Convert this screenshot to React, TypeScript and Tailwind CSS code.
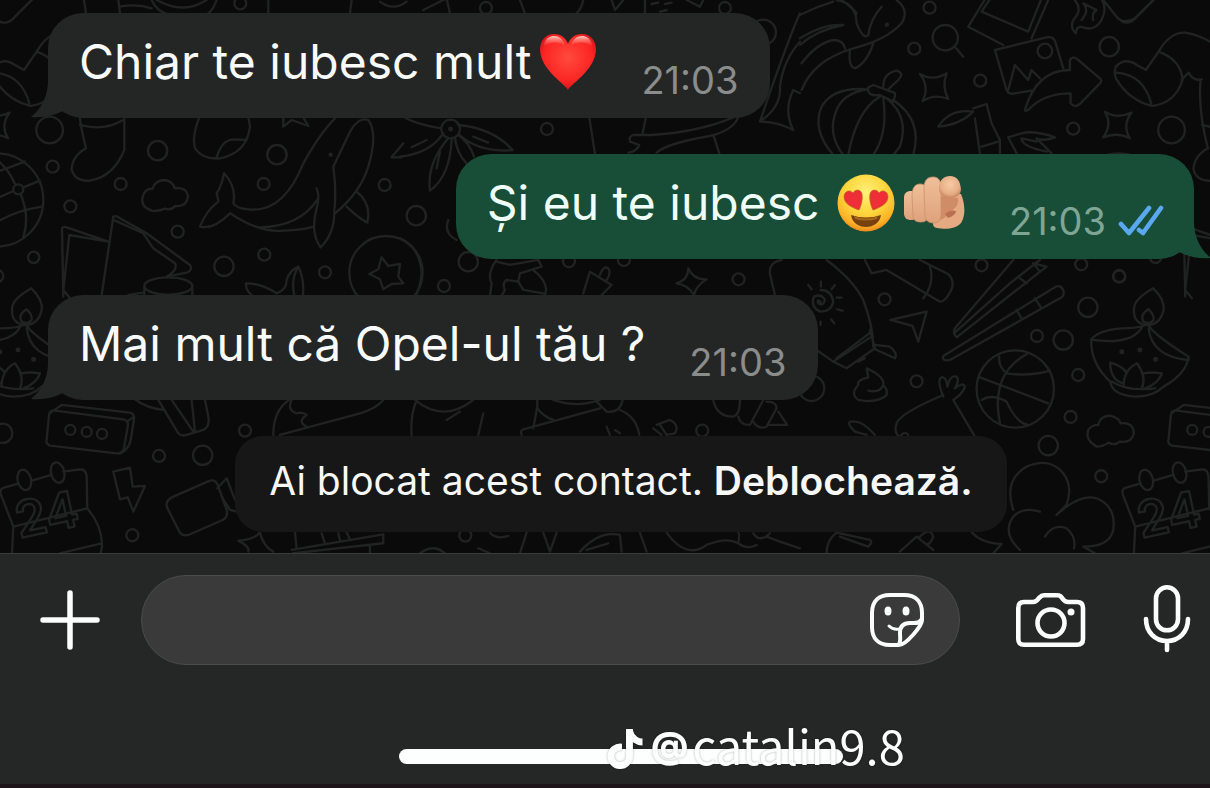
import type { ReactNode } from 'react';
import { FaTiktok } from 'react-icons/fa';

type MessageProps = {
  side: 'in' | 'out';
  time: string;
  read?: boolean;
  children: ReactNode;
};

function Heart() {
  return (
    <svg viewBox="0 0 58 58" className="w-[58px] h-[58px]" role="img" aria-label="red heart">
      <defs>
        <radialGradient id="heart-fill" cx="50%" cy="42%" r="62%">
          <stop offset="0" stopColor="#ff4a3c" />
          <stop offset="0.7" stopColor="#fb2524" />
          <stop offset="1" stopColor="#c40d18" />
        </radialGradient>
        <linearGradient id="heart-shine" x1="0" y1="0" x2="0" y2="1">
          <stop offset="0" stopColor="#ffd0c6" />
          <stop offset="1" stopColor="#ff5a4a" stopOpacity="0" />
        </linearGradient>
      </defs>
      <path d="M29 57C25 50 2 37 1 17C1 7 7 1 15 1C22 1 27 5 29 11C31 5 36 1 43 1C51 1 57 7 57 17C56 37 33 50 29 57Z" fill="url(#heart-fill)" />
      <path d="M5 11C7 5 11 3 15 3C20 3 24 6 26 12C20 9 11 8 5 14Z" fill="url(#heart-shine)" />
      <path d="M53 11C51 5 47 3 43 3C38 3 34 6 32 12C38 9 47 8 53 14Z" fill="url(#heart-shine)" />
    </svg>
  );
}

function HeartEyes() {
  return (
    <svg viewBox="0 0 58 58" className="w-[58px] h-[58px]" role="img" aria-label="smiling face with heart eyes">
      <defs>
        <radialGradient id="face-fill" cx="50%" cy="32%" r="68%">
          <stop offset="0" stopColor="#fff27a" />
          <stop offset="0.55" stopColor="#ffd43b" />
          <stop offset="0.85" stopColor="#fbb127" />
          <stop offset="1" stopColor="#ec8a1c" />
        </radialGradient>
      </defs>
      <circle cx="29" cy="29" r="28.5" fill="url(#face-fill)" />
      <path d="M22 36C16 34 7 30 7 23C7 17 13 15 16 19C18 15 24 15 25 20C26 26 24 32 22 36Z" fill="#ee2f37" stroke="#b9661c" strokeWidth="0.7" />
      <path d="M36 36C42 34 51 30 51 23C51 17 45 15 42 19C40 15 34 15 33 20C32 26 34 32 36 36Z" fill="#ee2f37" stroke="#b9661c" strokeWidth="0.7" />
      <path d="M14 41Q29 46 44 41C43 49 36 53 29 53C22 53 15 49 14 41Z" fill="#77410f" />
      <path d="M17 42Q29 47 41 42L40 45Q29 48 18 45Z" fill="#a5681b" />
    </svg>
  );
}

function PointingHand() {
  return (
    <svg viewBox="0 0 62 54" className="w-[62px] h-[54px]" role="img" aria-label="pointing at you">
      <defs>
        <linearGradient id="skin" x1="0" y1="0" x2="0" y2="1">
          <stop offset="0" stopColor="#efbf99" />
          <stop offset="1" stopColor="#dfa27b" />
        </linearGradient>
        <radialGradient id="fingertip" cx="50%" cy="38%" r="62%">
          <stop offset="0" stopColor="#f6cba7" />
          <stop offset="0.7" stopColor="#e8ae86" />
          <stop offset="1" stopColor="#c88762" />
        </radialGradient>
      </defs>
      <path d="M36 18L58 18C62 27 63 40 58 47C52 54 41 53 34 52C29 51 29 46 32 45Z" fill="#e6aa82" />
      <path d="M36 20L55 22C56 30 51 33 47 36C43 40 41 44 33 45Z" fill="#cf8c67" />
      <path d="M42 38Q47 33 53 35Q53 39 45 42Z" fill="#b87150" />
      <rect x="1" y="15" width="14" height="29" rx="6" fill="url(#skin)" />
      <path d="M9 20C9 12 12 8 17 8C22 8 25 11 25 17V40C25 44 22 46 18 46C13 46 10 44 10 40Z" fill="url(#skin)" stroke="#cc9069" strokeWidth="0.8" />
      <path d="M21 12C21 4 25 1 30 1C36 1 38 5 38 12V38C38 44 36 47 31 47C25 47 22 44 22 39Z" fill="url(#skin)" stroke="#cc9069" strokeWidth="0.8" />
      <path d="M36 12C36 4 41 0 47 0C54 0 57 5 58 13C58 19 53 22 47 22C41 22 36 19 36 12Z" fill="url(#fingertip)" />
    </svg>
  );
}

function DoubleCheck() {
  return (
    <svg viewBox="0 0 46 32" className="w-[46px] h-8" fill="none" stroke="#5aa9f0" strokeWidth="4.6" strokeLinecap="round" strokeLinejoin="round" role="img" aria-label="Citit">
      <path d="M3 19L11 28L31 3" />
      <path d="M21 25L25 28L43 3" />
    </svg>
  );
}

function Message({ side, time, read, children }: MessageProps) {
  const out = side === 'out';
  return (
    <div
      className={`relative flex w-fit items-end rounded-[35px] pt-[19px] pb-[18px] pl-[31px] ${
        out ? 'self-end bg-[#184d38] pr-[30px]' : 'self-start bg-[#242625] pr-8'
      }`}
    >
      {/* tail */}
      <svg
        viewBox="0 0 34 40"
        className={`absolute bottom-0 w-[34px] h-10 ${
          out ? '-right-[17px] -scale-x-100 fill-[#184d38]' : '-left-[17px] fill-[#242625]'
        }`}
        aria-hidden="true"
      >
        <path d="M17 0V5C16 20 10 31 0 39C12 40 22 38 32 33L34 0Z" />
      </svg>
      <p className={`flex items-center pb-2 text-5xl leading-[60px] whitespace-pre ${out ? 'text-[#effff7]' : 'text-[#f9fbfa]'}`}>
        {children}
      </p>
      <div className={`flex items-center gap-3 pl-11 text-[38px] leading-10 ${out ? 'text-[#7fa594]' : 'text-[#8b8c8c]'}`}>
        <time>{time}</time>
        {read && <DoubleCheck />}
      </div>
    </div>
  );
}

const bigDots = [
  [473, 452, 29], [831, 464, 29], [672, 799, 29], [608, 1366, 29], [1249, 647, 29], [1405, 785, 29],
  [3328, 140, 29], [3190, 1020, 29], [3264, 922, 29], [3145, 1337, 29], [2435, 1165, 38], [2290, 97, 38],
];

const smallDots = [
  [721, 10, 18], [362, 552, 18], [211, 619, 18], [533, 695, 18], [791, 552, 18], [793, 764, 18],
  [975, 817, 18], [1154, 555, 18], [735, 1292, 18], [477, 1368, 18], [397, 1606, 18], [1458, 24, 18],
  [2175, 24, 18], [1641, 387, 18], [1332, 858, 18], [2216, 838, 18], [2789, 23, 18], [2743, 146, 18],
  [2941, 242, 18], [3220, 386, 18], [2945, 796, 18], [3244, 793, 18], [3358, 830, 18], [2654, 898, 18],
  [3111, 1008, 18], [3235, 1125, 18], [2750, 1144, 18], [3212, 1251, 18], [3304, 1429, 18],
  [2107, 1292, 18], [1396, 1607, 18], [1707, 784, 18], [1872, 780, 18],
];

// Doodles on the seam: drawn at the left edge and again one tile to the right.
function SeamDoodles() {
  return (
    <g>
      <path d="M-18 200Q10 170 45 195L72 210L110 155Q145 95 190 98Q250 108 300 150M110 155Q178 180 182 240Q160 310 90 318Q20 300-18 235Q-25 215-18 200M-15 218Q65 225 88 310" />
      <path d="M179 240L200 218Q215 245 240 238M236 240Q228 330 258 445Q215 470 215 510Q225 545 270 542Q340 530 373 450V355M240 375Q310 395 370 360" />
      <path d="M-51 335Q-14 358 29 338Q0 375 24 415Q-14 395-56 412Q-28 375-51 335Z" />
      <path d="M0 65Q25 75 45 50L110-15" />
      <circle cx="149" cy="390" r="40" />
      <circle cx="158" cy="500" r="18" />
      <circle cx="101" cy="772" r="17" />
      <circle cx="-8" cy="828" r="18" />
      {/* globe */}
      <circle cx="-10" cy="600" r="140" />
      <circle cx="55" cy="568" r="15" />
      <path d="M-20 470Q25 505 45 552M-20 520L75 485M70 562L120 542M62 583Q90 650 70 712M-20 672Q50 630 126 620M-20 600L40 573" />
      {/* greeting cards */}
      <path d="M186 685L190 890M186 685Q190 678 200 682L325 725L208 705L190 870L210 895M340 650L305 885M340 650Q350 645 360 655L440 700L570 795Q580 810 560 818L500 830M345 662L430 700L460 745L525 790Q535 810 500 830" />
      <ellipse cx="505" cy="858" rx="72" ry="26" />
      <path d="M433 858V900M577 858V900M385 885L430 878" />
      {/* oil lamp */}
      <path d="M94 865Q130 900 125 930Q115 975 75 975Q30 970 37 920Q42 895 94 865ZM80 928Q98 945 95 960Q85 975 65 965Q52 945 80 928Z" />
      <path d="M-92 1018Q-70 990 0 985Q50 985 70 975L80 975Q90 1000 200 1070Q195 1120 125 1160Q95 1190 40 1190Q-30 1185-35 1145Q-95 1090-92 1018ZM-88 1020Q30 1035 60 982M80 985Q90 1070 200 1080M-30 1145Q20 1175 100 1165" />
      <path d="M5 1160Q5 1110 45 1090Q75 1130 60 1165M5 1150Q-35 1140-35 1088Q-5 1095 12 1115M65 1120Q90 1115 120 1120Q110 1150 70 1165" />
      <circle cx="0" cy="1055" r="4" />
      <circle cx="54" cy="1050" r="4" />
      <circle cx="101" cy="1078" r="4" />
      {/* cassette */}
      <path d="M165 1232L370 1258Q388 1262 383 1280L372 1345Q366 1362 350 1360L150 1337Q136 1332 140 1318L147 1245Q150 1230 165 1232ZM152 1238L185 1215L390 1238Q405 1242 402 1258L392 1320Q388 1345 362 1360M385 1262L402 1250" />
      <circle cx="211" cy="1290" r="15" />
      <circle cx="260" cy="1296" r="15" />
      <circle cx="306" cy="1302" r="15" />
      {/* calendar */}
      <path d="M52 1452L15 1462Q-3 1465 3 1485L40 1580L262 1525L260 1430Q258 1408 240 1408L190 1415M95 1442L155 1425M40 1580L36 1660M262 1525Q308 1580 306 1640L302 1660M180 1660L305 1630" />
      <ellipse cx="73" cy="1440" rx="20" ry="31" transform="rotate(-14 73 1440)" />
      <ellipse cx="173" cy="1418" rx="20" ry="31" transform="rotate(-14 173 1418)" />
      <text x="58" y="1615" transform="rotate(-12 58 1615)" className="font-['Inter',sans-serif] text-[150px] font-semibold">24</text>
    </g>
  );
}

function Wallpaper() {
  return (
    <svg className="absolute inset-0 h-full w-full" fill="none" stroke="#212222" strokeWidth="7" strokeLinecap="round" strokeLinejoin="round" aria-hidden="true">
      <g transform="scale(0.3333)">
        {[...bigDots, ...smallDots].map(([cx, cy, r]) => (
          <circle key={`${cx}-${cy}`} cx={cx} cy={cy} r={r} />
        ))}
        <circle cx="8" cy="1300" r="29" />
        <SeamDoodles />
        <g transform="translate(3366 0)">
          <SeamDoodles />
        </g>

        {/* top edge */}
        <path d="M252 0L258 40M355 0L360 40M455 0Q470 35 510 45M360 20Q410 10 455 25M470 0Q550 45 620 0M650 0Q640 30 620 45M805 0V40M1055 0L1050 40M1140 5Q1180 35 1220 5M1270 30L1340-5L1350 40M1560 0L1575 40M1835 0L1845 30L1870 0M1750 0Q1745 25 1730 40M1935 0V40M1955 12L1975 8M1995 12L2015 8M1980 35L2000 30M2060 0L2100 20L2110 0" />
        {/* cloud */}
        <path d="M455 632Q420 620 428 590Q435 565 458 566Q465 540 495 540Q520 545 524 565Q560 560 564 590Q560 622 525 618Q515 632 495 626Q475 635 455 632Z" />
        {/* candy */}
        <path d="M598 352Q575 410 585 445Q610 480 660 475Q740 460 750 380L745 352M650 472Q665 420 700 418L740 420M850 352V380L875 360L925 378L910 352" />
        {/* whale */}
        <path d="M1005 355Q960 400 910 490Q850 640 745 628Q710 625 700 610Q710 560 672 520Q665 560 650 580Q655 600 655 605Q620 630 600 680Q640 690 690 640Q780 700 850 692Q910 690 940 680M780 682Q900 680 955 595M950 565Q960 590 950 625Q930 700 962 742Q1005 700 1003 630Q1010 580 1000 500L1050 395Q1075 350 1105 360Q1135 400 1105 500Q1080 580 1005 640M1070 575Q1115 610 1102 668Q1070 650 1040 620" />
        <circle cx="992" cy="464" r="3" />
        {/* sprout */}
        <path d="M780 900Q735 880 738 850Q785 850 830 880Q860 870 860 840Q870 810 895 800Q915 840 908 895M895 800Q870 840 885 895" />
        {/* star badge */}
        <circle cx="1158" cy="818" r="110" />
        <path d="M1145 772L1165 798L1200 792L1195 830L1210 850L1175 852L1150 868L1140 838L1108 822L1135 808Z" />
        {/* flower */}
        <circle cx="1352" cy="387" r="28" />
        <circle cx="1352" cy="387" r="4" />
        <path d="M1324 385Q1250 375 1200 345M1330 400Q1290 460 1200 470M1375 375Q1480 385 1538 450Q1440 460 1378 405M1345 415Q1280 490 1290 572Q1350 530 1355 418M1365 412Q1370 460 1400 490M1375 405Q1410 430 1422 470M1235 442L1280 420M1420 410L1465 428M1320 455L1310 505M1175 472L1210 430M1175 472H1205" />
        {/* magician's hand */}
        <path d="M1768 352L1785 460M1938 352L1928 400M2200 352Q2100 395 1955 405H1900Q1885 410 1890 425L1918 435Q1910 455 1885 458M1970 458Q2000 430 2130 408Q2200 390 2215 352M2142 410L2158 460" />
        <path d="M1370 720Q1330 700 1345 660M1200 715Q1260 740 1265 820Q1260 870 1240 900" />
        {/* puzzle */}
        <path d="M1490 780Q1460 820 1475 850L1470 890M1490 785L1530 795L1615 780L1625 800L1560 820L1555 845L1520 840Q1505 850 1515 870L1500 895M1555 845L1570 870L1630 880M1600 810Q1650 850 1635 885M1750 880L1770 815L1835 855L1805 885M1800 825Q1810 795 1825 805Q1835 820 1820 840" />
        <path d="M2065 805Q2080 840 2120 838Q2090 855 2082 885Q2065 855 2030 850Q2065 840 2065 805ZM2345 780Q2300 790 2312 830L2325 885" />

        {/* comet and dolphin */}
        <path d="M2510 0Q2570 10 2570 70Q2590 120 2605 105Q2610 60 2645 20M2525 0Q2560 25 2570 40M2690 0Q2730 30 2705 70Q2660 120 2560 145Q2440 180 2405 270M2400 135Q2450 90 2530 75Q2470 70 2400 115M2405 190Q2450 130 2500 120Q2530 120 2535 145M2550 155Q2545 200 2565 205Q2600 190 2620 130" />
        <path d="M2400 45Q2450 20 2500 5M2400 125Q2350 180 2340 260Q2345 320 2280 365Q2330 365 2380 390Q2350 330 2380 270L2400 280M2400 40Q2360 130 2280 365" />
        <circle cx="2661" cy="74" r="3" />
        {/* magnifier */}
        <circle cx="2836" cy="113" r="38" />
        <path d="M2866 142L2890 170" />
        {/* photos */}
        <path d="M2960-10L2905 80L3010 135M3145 0L3095 115M2975-10L2945 35L3085 95L3125-5M2985 150L3140 112Q3160 108 3166 125L3190 205M2985 150L3020 270Q3025 285 3045 280L3095 272M3025 270L3045 195L3085 240L3095 210L3120 235" />
        <circle cx="3135" cy="153" r="22" />
        <path d="M3075 330Q3110 210 3210 210V180Q3220 165 3235 180L3300 235Q3308 242 3300 250L3240 312Q3225 325 3212 310V280Q3130 280 3085 330Q3075 335 3075 330Z" />
        {/* flame */}
        <path d="M3225 0Q3250 30 3220 60Q3210 85 3228 100Q3230 75 3250 82Q3285 95 3305 60Q3325 20 3300-10M3245 60Q3270 30 3250 10L3290 30Q3275 40 3280 60M3310 0L3350 50Q3370 75 3405 55L3460 0" />
        {/* pumpkin */}
        <path d="M2600 268Q2500 260 2465 320Q2435 390 2500 465M2600 268Q2530 280 2510 330Q2480 400 2530 465M2640 290Q2570 330 2545 465M2650 295Q2665 400 2620 465M2660 295Q2730 350 2700 440L2680 465M2680 300Q2770 360 2740 465M2605 262Q2600 290 2640 285L2680 305Q2690 280 2682 278L2620 255ZM2650 260Q2650 220 2690 212Q2715 220 2695 240L2665 268" />
        <path d="M2760 222Q2800 245 2840 220Q2825 260 2845 297Q2805 280 2768 303Q2790 260 2760 222Z" />
        {/* palm and leaves */}
        <path d="M2815 380Q2850 325 2920 335Q2880 375 2815 380ZM2920 325L2960 312L2975 370L3000 420V460M2925 355L2940 460M2945 440L2995 425M3025 412L3065 400Q3100 390 3165 412Q3130 425 3110 415L3155 460M3025 412L3050 460M3065 415Q3065 440 3140 455M3065 415L3110 425" />
        {/* rocket */}
        <path d="M2480 780Q2560 840 2590 900Q2620 980 2620 1040M2450 1050L2500 1085L2615 1010M2500 1085L2540 1105L2625 1045L2610 990M2510 1075L2615 995M2625 1035L2670 1040Q2695 1060 2685 1075L2625 1048M2575 1085L2595 1075M2595 780L2615 820L2660 810L2820 905Q2840 905 2858 860Q2860 830 2840 820L2760 780M2770 895Q2805 850 2790 800" />
        {/* sun swirl */}
        <path d="M2462 906Q2450 895 2455 910Q2470 920 2475 900Q2465 880 2442 890Q2430 920 2460 935Q2495 935 2500 905Q2495 870 2462 870M2463 845V860M2505 855L2495 868M2525 893H2510M2528 932L2512 928M2503 970L2493 958M2462 975V965M2425 855L2435 868" />
        <path d="M2672 960L2780 935L2755 1025L2738 978Z" />
        {/* chopsticks */}
        <path d="M3040 780L2865 985Q2858 1000 2870 1012L3050 870L3140 800L3100 790M2862 1000L3030 850L3120 780M2830 1068L3160 865Q3180 850 3190 870Q3195 890 3180 895L2850 1080Q2825 1085 2830 1068M3050 930L3065 955M3105 895L3125 925M3060 835L3080 850M3100 790L3120 815" />
        {/* ice cream swirl */}
        <path d="M2600 1105Q2655 1130 2650 1155Q2670 1175 2655 1190Q2620 1210 2575 1200Q2550 1180 2575 1155Q2570 1140 2605 1132ZM2650 1155Q2640 1180 2605 1172" />
        {/* hand */}
        <path d="M2830 1185Q2700 1240 2690 1270Q2680 1300 2700 1310M2700 1310Q2715 1290 2725 1305M2860 1200L2925 1310M2830 1190Q2810 1140 2825 1132Q2840 1130 2842 1160Q2850 1125 2870 1130Q2880 1140 2865 1165Q2890 1145 2895 1160Q2890 1180 2860 1200" />
        {/* basketball */}
        <circle cx="3046" cy="1167" r="116" />
        <path d="M2940 1132L3145 1210M3085 1060Q2970 1120 3000 1270M2998 1070Q2995 1100 3020 1120Q3090 1130 3150 1112M2945 1200Q2975 1180 3020 1205Q3050 1270 3085 1275" />
        {/* clouds */}
        <path d="M3290 1340Q3255 1320 3265 1290Q3275 1275 3295 1275Q3300 1248 3330 1247Q3360 1255 3362 1270Q3400 1265 3402 1300Q3395 1330 3360 1325Q3345 1338 3325 1328Q3310 1340 3290 1340Z" />
        <path d="M3040 1530Q3010 1440 3080 1400Q3150 1370 3190 1420Q3220 1460 3200 1515L3170 1545Q3240 1480 3290 1495Q3350 1520 3340 1590Q3330 1640 3250 1640L3285 1660M3120 1535Q3070 1520 3040 1550Q3005 1600 3060 1650M3135 1610Q3160 1570 3200 1585Q3230 1610 3222 1645M2910 1590Q2940 1630 3005 1632L2980 1660" />
        {/* between the last message and the notice */}
        <path d="M405 1198Q440 1225 490 1230M475 1200L535 1300Q545 1310 560 1305L610 1290Q630 1280 625 1250L615 1200M515 1200L580 1295M575 1200L585 1295M820 1305Q820 1230 870 1198M840 1305L1080 1240Q1130 1225 1150 1200M875 1200Q860 1230 890 1240Q910 1235 920 1245Q890 1265 920 1280" />
        <path d="M1250 1200Q1230 1250 1235 1305M1245 1200Q1330 1270 1420 1200M1340 1260L1380 1235M1450 1240L1435 1305M1612 1200V1220L1600 1285M1612 1225Q1630 1250 1660 1260M1565 1305Q1560 1290 1570 1288L1800 1225M1660 1200Q1730 1225 1800 1200M1790 1205L1820 1235Q1860 1240 1868 1200M1860 1230Q1910 1250 1918 1305M1820 1280L1830 1305M1845 1290L1860 1300" />
        <path d="M1960 1285L1985 1305M1970 1275L2010 1260Q2040 1275 2025 1300L2000 1305L1980 1275M2140 1200Q2150 1250 2200 1250Q2220 1245 2220 1200M2215 1250Q2220 1275 2250 1275L2290 1200M2260 1265Q2275 1290 2300 1280L2330 1225Q2330 1205 2300 1205M2305 1275L2330 1275L2362 1275L2335 1235M2600 1305L2565 1295Q2530 1260 2565 1265Q2590 1265 2625 1305" />
        {/* bolt and video camera */}
        <path d="M340 1415L390 1403L398 1460L435 1458L400 1535L383 1492L360 1498ZM520 1490L630 1442Q645 1438 652 1452L680 1530Q685 1550 668 1560L565 1605Q545 1610 538 1595L500 1520Q497 1500 520 1490ZM652 1465L680 1435L705 1500M665 1490L690 1530L710 1535" />
        {/* above the input bar */}
        <path d="M715 1622Q760 1620 780 1598Q790 1640 820 1655M715 1622Q750 1640 745 1655M885 1598L890 1645M875 1650L1150 1603V1630L880 1660M965 1600L975 1630M1015 1600L1020 1620M1040 1598L1048 1615M1110 1640V1660M1260 1660Q1300 1630 1335 1660M1470 1598Q1490 1620 1525 1608M1560 1660L1580 1598M1630 1598L1650 1655L1670 1598M1435 1645L1470 1660M1740 1655Q1800 1590 1860 1605L1865 1655M1760 1650L1825 1630M1920 1598L1940 1655M2000 1598Q2060 1680 2120 1635Q2180 1610 2215 1630Q2220 1600 2215 1598M2215 1630Q2240 1650 2270 1635M2260 1600Q2280 1630 2310 1600M2300 1610L2340 1625L2400 1645M2480 1660Q2480 1620 2510 1598L2610 1620Q2620 1625 2605 1640L2520 1610M2700 1655L2750 1610L2800 1650M2760 1610Q2790 1580 2800 1610Q2790 1640 2775 1630" />
      </g>
    </svg>
  );
}

function StickerIcon() {
  return (
    <svg viewBox="0 0 54 54" className="w-[54px] h-[54px]" fill="none" stroke="#fbfcfc" strokeWidth="4" strokeLinecap="round" strokeLinejoin="round" aria-hidden="true">
      <path d="M29 52H20C8 52 2 45 2 34V20C2 8 9 2 20 2H34C46 2 52 9 52 20V27C52 33 36 52 29 52ZM29 51C31 48 30 44 30 40C30 33 34 30 40 30C45 30 49 31 51 27" />
      <path d="M19 33Q23 37 29 36" strokeWidth="3" />
      <ellipse cx="18" cy="18" rx="3.5" ry="4.5" fill="#fbfcfc" stroke="none" />
      <ellipse cx="36" cy="18" rx="3.5" ry="4.5" fill="#fbfcfc" stroke="none" />
    </svg>
  );
}

function CameraIcon() {
  return (
    <svg viewBox="0 0 70 54" className="w-[70px] h-[54px]" fill="none" stroke="#fbfcfc" strokeWidth="4.6" strokeLinejoin="round" aria-hidden="true">
      <path d="M8 9H17C20 9 21 8 23 5C25 3 26 2.3 28 2.3H41C43 2.3 45 3 46 5C48 8 49 9 52 9H61C65 9 67 11 67 15V46C67 50 65 51.7 61 51.7H8C4 51.7 2.3 50 2.3 46V15C2.3 11 4 9 8 9Z" />
      <circle cx="35" cy="30" r="13.5" />
      <circle cx="55" cy="19" r="3.5" fill="#fbfcfc" stroke="none" />
    </svg>
  );
}

function MicIcon() {
  return (
    <svg viewBox="0 0 48 70" className="w-12 h-[70px]" fill="none" stroke="#fbfcfc" strokeWidth="4.6" strokeLinecap="round" aria-hidden="true">
      <rect x="13" y="2.3" width="22" height="43" rx="11" />
      <path d="M3 34C3 47 12 56 24 56C36 56 45 47 45 34M24 56V65" />
    </svg>
  );
}

export default function App() {
  return (
    <div className="flex min-h-screen flex-col overflow-hidden bg-[#252726] font-['Inter','Liberation_Sans',sans-serif]">
      {/* Conversation */}
      <main className="relative overflow-hidden bg-[#0a0a0a]">
        <Wallpaper />
        <div className="relative flex flex-col gap-9 pt-[13px] pr-4 pb-[21px] pl-12">
          <Message side="in" time="21:03">
            Chiar te iubesc mult
            <span className="pl-2"><Heart /></span>
          </Message>
          <Message side="out" time="21:03" read>
            {'Și eu te iubesc '}
            <span className="flex items-center gap-2 pl-1">
              <HeartEyes />
              <PointingHand />
            </span>
          </Message>
          <Message side="in" time="21:03">Mai mult că Opel-ul tău ?</Message>
          <div className="flex w-fit self-center rounded-[28px] bg-[#171717] px-[34px] pt-[21px] pb-[27px] text-[39px] leading-[48px] text-[#f7f7f7]">
            <p>
              Ai blocat acest contact.{' '}
              <button type="button" className="font-semibold">Deblochează.</button>
            </p>
          </div>
        </div>
      </main>

      {/* Composer */}
      <footer className="flex-1 border-t border-[#3a3c3b] pt-[21px]">
        <form className="flex items-center pr-[19px] pl-10">
          <button type="button" aria-label="Atașează" className="shrink-0">
            <svg viewBox="0 0 60 60" className="w-[60px] h-[60px]" stroke="#fbfcfc" strokeWidth="5.5" strokeLinecap="round" aria-hidden="true">
              <path d="M3 30H57M30 3V57" />
            </svg>
          </button>
          <div className="ml-[41px] flex h-[90px] min-w-0 flex-1 items-center rounded-full border border-[#4a4c4b] bg-[#3a3a3a] pr-[35px] pl-10">
            <input type="text" aria-label="Mesaj" className="h-full min-w-0 flex-1 bg-transparent text-[39px] text-white outline-none" />
            <button type="button" aria-label="Stickere" className="shrink-0"><StickerIcon /></button>
          </div>
          <button type="button" aria-label="Cameră" className="ml-14 shrink-0"><CameraIcon /></button>
          <button type="button" aria-label="Mesaj vocal" className="ml-[57px] shrink-0"><MicIcon /></button>
        </form>

        {/* Home indicator, with the creator tag lying over it */}
        <div className="flex justify-center pt-[84px] pl-8">
          <div className="relative h-[15px] w-[444px] rounded-full bg-[#fdfefe]">
            <div className="absolute -top-[34px] left-[208px] flex h-[60px] items-center text-[#fdfefe] drop-shadow-[0_0_1px_rgba(0,0,0,0.3)]">
              <FaTiktok className="mt-2 h-10 w-9" aria-label="TikTok" />
              <span className="pl-2 text-4xl font-extrabold">@</span>
              <span className="pl-1 font-['Noto_Sans_CJK_SC',sans-serif] text-[47px] leading-[60px]">catalin9.8</span>
            </div>
          </div>
        </div>
      </footer>
      <div className="h-1 bg-[#1e151a]" />
    </div>
  );
}
